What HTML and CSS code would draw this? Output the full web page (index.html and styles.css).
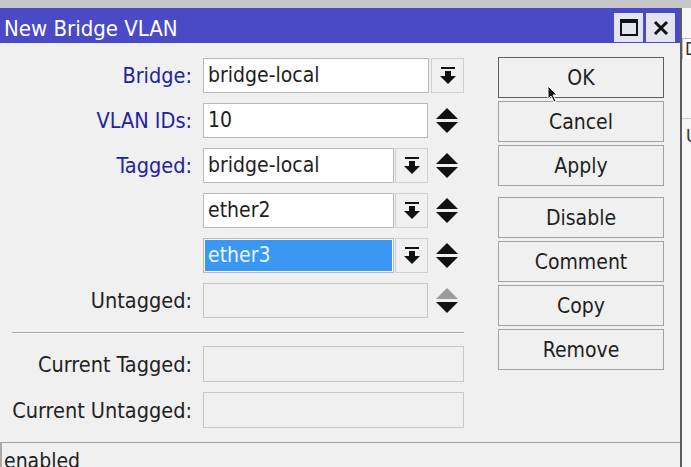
FILE: index.html
```html
<!DOCTYPE html>
<html lang="en">
<head>
  <meta charset="UTF-8">
  <title>New Bridge VLAN</title>
  <link rel="stylesheet" href="styles.css">
</head>
<body>
  <div class="desk">
    <div class="dialog">
      <div class="titlebar">
        <span class="title">New Bridge VLAN</span>
        <div class="winbtns">
          <span class="winbtn">
            <svg width="18" height="17" viewBox="0 0 18 17"><rect x="1" y="1" width="16" height="15" fill="none" stroke="#111" stroke-width="2"/><rect x="1" y="1" width="16" height="3" fill="#111"/></svg>
          </span>
          <span class="winbtn">
            <svg width="16" height="16" viewBox="0 0 16 16"><path d="M2 2 L14 14 M14 2 L2 14" stroke="#111" stroke-width="3"/></svg>
          </span>
        </div>
      </div>

      <div class="main">
        <div class="form">
          <label class="lbl blue">Bridge:</label>
          <div class="field">
            <div class="box">bridge-local</div>
            <div class="drop"><svg class="ico-drop" viewBox="0 0 16 17"><rect x="1" y="0" width="14" height="2"/><rect x="5" y="4" width="6" height="5"/><polygon points="0,9 16,9 8,17"/></svg></div>
          </div>

          <label class="lbl blue">VLAN IDs:</label>
          <div class="field">
            <div class="box">10</div>
            <div class="spin"><svg class="ico-spin" viewBox="0 0 22 25"><polygon points="11,0 22,11 0,11"/><polygon points="0,14 22,14 11,25"/></svg></div>
          </div>

          <label class="lbl blue">Tagged:</label>
          <div class="field">
            <div class="box short">bridge-local</div>
            <div class="drop mid"><svg class="ico-drop" viewBox="0 0 16 17"><rect x="1" y="0" width="14" height="2"/><rect x="5" y="4" width="6" height="5"/><polygon points="0,9 16,9 8,17"/></svg></div>
            <div class="spin"><svg class="ico-spin" viewBox="0 0 22 25"><polygon points="11,0 22,11 0,11"/><polygon points="0,14 22,14 11,25"/></svg></div>
          </div>

          <span></span>
          <div class="field">
            <div class="box short">ether2</div>
            <div class="drop mid"><svg class="ico-drop" viewBox="0 0 16 17"><rect x="1" y="0" width="14" height="2"/><rect x="5" y="4" width="6" height="5"/><polygon points="0,9 16,9 8,17"/></svg></div>
            <div class="spin"><svg class="ico-spin" viewBox="0 0 22 25"><polygon points="11,0 22,11 0,11"/><polygon points="0,14 22,14 11,25"/></svg></div>
          </div>

          <span></span>
          <div class="field">
            <div class="box short"><span class="sel">ether3</span></div>
            <div class="drop mid"><svg class="ico-drop" viewBox="0 0 16 17"><rect x="1" y="0" width="14" height="2"/><rect x="5" y="4" width="6" height="5"/><polygon points="0,9 16,9 8,17"/></svg></div>
            <div class="spin"><svg class="ico-spin" viewBox="0 0 22 25"><polygon points="11,0 22,11 0,11"/><polygon points="0,14 22,14 11,25"/></svg></div>
          </div>

          <label class="lbl">Untagged:</label>
          <div class="field">
            <div class="box off"></div>
            <div class="spin"><svg class="ico-spin" viewBox="0 0 22 25"><polygon points="11,0 22,11 0,11" fill="#9a9a9a"/><polygon points="0,14 22,14 11,25"/></svg></div>
          </div>

          <div class="sep"></div>

          <label class="lbl">Current Tagged:</label>
          <div class="field tall"><div class="box off"></div></div>

          <label class="lbl">Current Untagged:</label>
          <div class="field tall"><div class="box off"></div></div>
        </div>

        <div class="buttons">
          <button class="btn default">OK</button>
          <button class="btn">Cancel</button>
          <button class="btn">Apply</button>
          <button class="btn gap">Disable</button>
          <button class="btn">Comment</button>
          <button class="btn">Copy</button>
          <button class="btn">Remove</button>
        </div>
      </div>

      <div class="status">enabled</div>

      <!-- mouse pointer over the OK button -->
      <svg class="cursor" width="12" height="18" viewBox="0 0 12 18"><polygon points="1,1 1,14 4,11 7,17 9,16 6,10 10,10" fill="#111" stroke="#fff" stroke-width="1"/></svg>
    </div>

    <div class="behind">
      <div class="behind-head">D</div>
      <div class="behind-row">U</div>
    </div>
  </div>
</body>
</html>
```
FILE: styles.css
```css
html, body {
  margin: 0;
  height: 100%;
  overflow: hidden;
}
body {
  background-color: #c6c6c6;
  font-family: "DejaVu Sans Condensed", "Liberation Sans", Arial, sans-serif;
  font-size: 21px;
  color: #1e1e1e;
}
.desk {
  display: flex;
  margin-top: 8px;
  height: 459px;
}

/* dialog */
.dialog {
  position: relative;
  width: 682px;
  box-sizing: border-box;
  border-right: 2px solid #5c5c5c;
  background-color: #f0f0f0;
  display: flex;
  flex-direction: column;
}
.titlebar {
  height: 35px;
  flex-shrink: 0;
  background-color: #4a4ac6;
  display: flex;
  align-items: center;
  justify-content: space-between;
  padding: 0 5px 0 4px;
}
.title {
  color: #fff;
  font-size: 22px;
  padding-top: 5px;
}
.winbtns {
  display: flex;
  gap: 3px;
  padding-top: 4px;
}
.winbtn {
  width: 29px;
  height: 29px;
  background-color: #e4e4ee;
  display: flex;
  align-items: center;
  justify-content: center;
}

.main {
  display: flex;
  height: 399px;
  flex-shrink: 0;
}
.form {
  width: 498px;
  padding-top: 15px;
  box-sizing: border-box;
  display: grid;
  grid-template-columns: 192px 261px;
  column-gap: 11px;
  row-gap: 10px;
  align-content: start;
}
.lbl {
  text-align: right;
  align-self: center;
  white-space: nowrap;
  font-size: 21.5px;
  color: #222;
}
.lbl.blue {
  color: #23239c;
}
.field {
  display: flex;
  height: 35px;
}
.field.tall {
  height: 36px;
}
.box {
  flex: 1;
  box-sizing: border-box;
  border: 1px solid #b9b9b9;
  background-color: #fff;
  padding: 0 4px;
  line-height: 33px;
  white-space: nowrap;
  overflow: hidden;
}
.box.short {
  flex: none;
  width: 191px;
}
.box.off {
  background-color: #f0f0f0;
  border-color: #c6c6c6;
}
.box .sel {
  display: block;
  margin: 1px -3px 1px -3px;
  padding-left: 3px;
  line-height: 31px;
  background-color: #3a98f2;
  color: #e9f4ff;
}
.drop {
  width: 33px;
  margin-left: 2px;
  box-sizing: border-box;
  border: 1px solid #cfcfcf;
  background-color: #f0f0f0;
  display: flex;
  align-items: center;
  justify-content: center;
}
.drop.mid {
  width: 34px;
  margin-left: 1px;
}
.ico-drop {
  width: 16px;
  height: 17px;
  fill: #111;
}
.spin {
  width: 36px;
  box-sizing: border-box;
  padding-left: 8px;
  display: flex;
  align-items: center;
}
.ico-spin {
  width: 22px;
  height: 25px;
  fill: #111;
}
.sep {
  grid-column: 1 / 3;
  margin: 4px 0 2px 12px;
  height: 0;
  border-top: 1px solid #a9a9a9;
  border-bottom: 1px solid #fbfbfb;
}

/* right buttons */
.buttons {
  width: 166px;
  padding-top: 14px;
  display: flex;
  flex-direction: column;
  gap: 3px;
}
.btn {
  height: 41px;
  font-family: inherit;
  font-size: 21px;
  color: #1e1e1e;
  background-color: #f0f0f0;
  border: 1px solid #a3a3a3;
  border-radius: 0;
  padding: 0;
}
.btn.default {
  border-color: #5e5e5e;
}
.btn.gap {
  margin-top: 8px;
}

.status {
  border-top: 1px solid #a3a3a3;
  border-left: 2px solid #a8a8a8;
  padding: 6px 2px;
  flex: 1;
}

.cursor {
  position: absolute;
  left: 547px;
  top: 77px;
}

/* window peeking behind the dialog */
.behind {
  flex: 1;
  background-color: #f6f6f6;
  overflow: hidden;
  padding-top: 30px;
}
.behind-head {
  height: 20px;
  border-top: 1px solid #bdbdbd;
  border-left: 1px solid #bdbdbd;
  background-color: #fff;
  padding-left: 2px;
  font-size: 18px;
  line-height: 20px;
  color: #333;
}
.behind-row {
  margin-top: 59px;
  border-top: 1px solid #c9c9c9;
  padding: 6px 0 0 4px;
  font-size: 18px;
  color: #333;
}
```
